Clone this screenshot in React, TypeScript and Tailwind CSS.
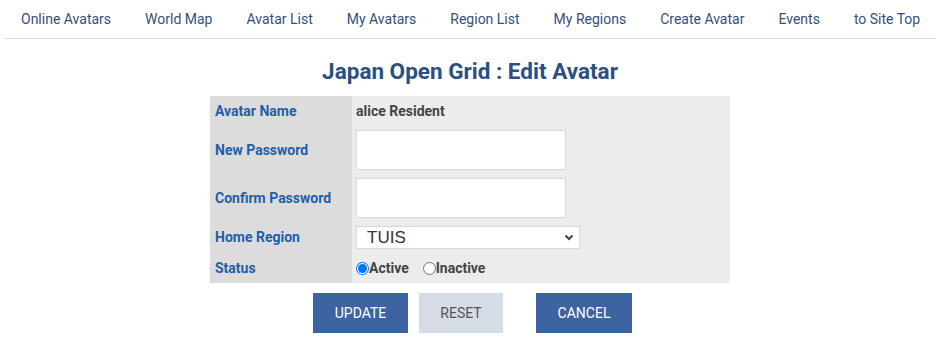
import React from "react";

const navItems = [
  "Online Avatars",
  "World Map",
  "Avatar List",
  "My Avatars",
  "Region List",
  "My Regions",
  "Create Avatar",
  "Events",
  "to Site Top",
];

function Label({ children }: { children: React.ReactNode }) {
  return (
    <td className="w-[142px] bg-[#dcdcdc] pl-[5px] align-middle text-[14px] font-bold text-[#1f5ea8]">
      {children}
    </td>
  );
}

export default function App() {
  return (
    <div
      className="w-[948px] h-[356px] bg-white"
      style={{ fontFamily: "Roboto, 'Liberation Sans', sans-serif" }}
    >
      <div className="ml-[4px] w-[932px]">
        <nav className="flex h-[39px] items-center gap-[34px] border-b border-[#dfe1e8] pl-[17px] text-[14px] text-[#34507a]">
          {navItems.map((n) => (
            <span key={n} className="whitespace-nowrap">
              {n}
            </span>
          ))}
        </nav>
        <h1 className="pt-[18px] pb-[11px] text-center text-[22.5px] font-bold leading-[28px] text-[#2b4f80]">
          Japan Open Grid : Edit Avatar
        </h1>
        <table className="mx-auto w-[520px] border-collapse">
          <tbody>
            <tr className="h-[30px]">
              <Label>Avatar Name</Label>
              <td className="bg-[#ececec] pl-[4px] text-[14px] font-bold text-[#444]">alice Resident</td>
            </tr>
            <tr className="h-[48px]">
              <Label>New Password</Label>
              <td className="bg-[#ececec] pl-[4px] align-middle">
                <div className="h-[40px] w-[210px] border border-[#d3dae7] bg-white" />
              </td>
            </tr>
            <tr className="h-[48px]">
              <Label>Confirm Password</Label>
              <td className="bg-[#ececec] pl-[4px] align-middle">
                <div className="h-[40px] w-[210px] border border-[#d3dae7] bg-white" />
              </td>
            </tr>
            <tr className="h-[31px]">
              <Label>Home Region</Label>
              <td className="bg-[#ececec] pl-[4px] align-middle">
                <div className="flex h-[23px] w-[224px] items-center justify-between border border-[#d3dae7] bg-white pl-[10px] pr-[5px]">
                  <span
                    className="text-[17px] leading-[20px] text-[#333]"
                    style={{ fontFamily: "'Liberation Sans', Arial, sans-serif" }}
                  >
                    TUIS
                  </span>
                  <svg width="10" height="7" viewBox="0 0 10 7">
                    <path d="M1.5 1.5 L5 5 L8.5 1.5" fill="none" stroke="#444" strokeWidth="2" />
                  </svg>
                </div>
              </td>
            </tr>
            <tr className="h-[30px]">
              <Label>Status</Label>
              <td className="bg-[#ececec] pl-[4px] align-middle text-[14px] font-bold text-[#444]">
                <div className="flex items-center">
                  <span className="flex h-[13px] w-[13px] items-center justify-center rounded-full bg-[#0075ff]">
                    <span className="flex h-[11px] w-[11px] items-center justify-center rounded-full bg-white">
                      <span className="h-[9px] w-[9px] rounded-full bg-[#0075ff]" />
                    </span>
                  </span>
                  <span>Active</span>
                  <span className="ml-[14px] h-[13px] w-[13px] rounded-full border border-[#767676] bg-white" />
                  <span>Inactive</span>
                </div>
              </td>
            </tr>
          </tbody>
        </table>
        <div className="mt-[10px] flex justify-center pl-[5px] text-[14px]">
          <button className="h-[40px] w-[95px] bg-[#3d63a0] text-white">UPDATE</button>
          <button className="ml-[11px] h-[40px] w-[84px] bg-[#d5dce6] text-[#555]">RESET</button>
          <button className="ml-[33px] h-[40px] w-[96px] bg-[#3d63a0] text-white">CANCEL</button>
        </div>
      </div>
    </div>
  );
}
